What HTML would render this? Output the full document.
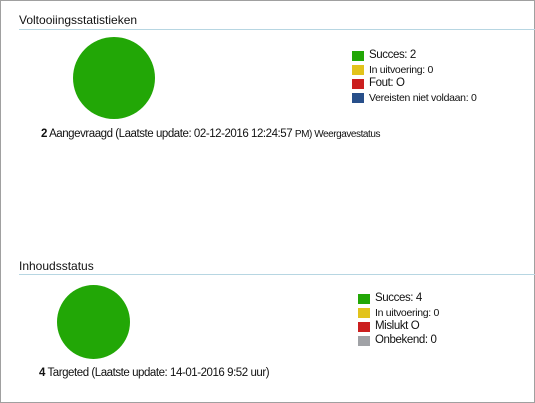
<!DOCTYPE html>
<html><head><style>
body{margin:0;width:535px;height:403px;overflow:hidden;background:#fff;font-family:"Liberation Sans",sans-serif;color:#111}
#f{position:absolute;left:0;top:0;width:533px;height:401px;border:1px solid #a0a0a0}
.a{position:absolute;white-space:nowrap}
.t{font-size:12px}
.line{position:absolute;height:1px;background:#b7d6e2;right:0}
.sq{position:absolute;width:12px;height:10px}
.l{position:absolute;font-size:11.5px;white-space:nowrap;letter-spacing:-0.4px}
.s{font-size:10.5px;letter-spacing:-0.3px}
.c{position:absolute;border-radius:50%;background:#22a706}
</style></head><body><div id="f"></div>
<div class="a t" style="left:19px;top:13px">Voltooiingsstatistieken</div>
<div class="line" style="left:19px;top:29px"></div>
<div class="c" style="left:73px;top:37px;width:82px;height:82px"></div>
<div class="sq" style="left:352px;top:51px;background:#22a706"></div><div class="l" style="left:369px;top:49px">Succes: 2</div>
<div class="sq" style="left:352px;top:65px;background:#e2c31c"></div><div class="l s" style="left:369px;top:64px">In uitvoering: 0</div>
<div class="sq" style="left:352px;top:79px;background:#cb1f1f"></div><div class="l" style="left:369px;top:77px">Fout: O</div>
<div class="sq" style="left:352px;top:93px;background:#284f8a"></div><div class="l s" style="left:369px;top:92px">Vereisten niet voldaan: 0</div>
<div class="a" style="left:41px;top:128px;font-size:11.5px;letter-spacing:-0.45px"><b>2</b> Aangevraagd (Laatste update: 02-12-2016 12:24:57 <span style="font-size:10px">PM) Weergavestatus</span></div>
<div class="a t" style="left:19px;top:259px">Inhoudsstatus</div>
<div class="line" style="left:19px;top:274px"></div>
<div class="c" style="left:57px;top:285px;width:73px;height:74px"></div>
<div class="sq" style="left:358px;top:294px;background:#22a706"></div><div class="l" style="left:375px;top:292px">Succes: 4</div>
<div class="sq" style="left:358px;top:308px;background:#e2c31c"></div><div class="l s" style="left:375px;top:307px">In uitvoering: 0</div>
<div class="sq" style="left:358px;top:322px;background:#cb1f1f"></div><div class="l" style="left:375px;top:320px">Mislukt O</div>
<div class="sq" style="left:358px;top:336px;background:#a0a2a6"></div><div class="l" style="left:375px;top:334px">Onbekend: 0</div>
<div class="a" style="left:39px;top:367px;font-size:11.5px;letter-spacing:-0.45px"><b>4</b> Targeted (Laatste update: 14-01-2016 9:52 uur)</div>
</body></html>
